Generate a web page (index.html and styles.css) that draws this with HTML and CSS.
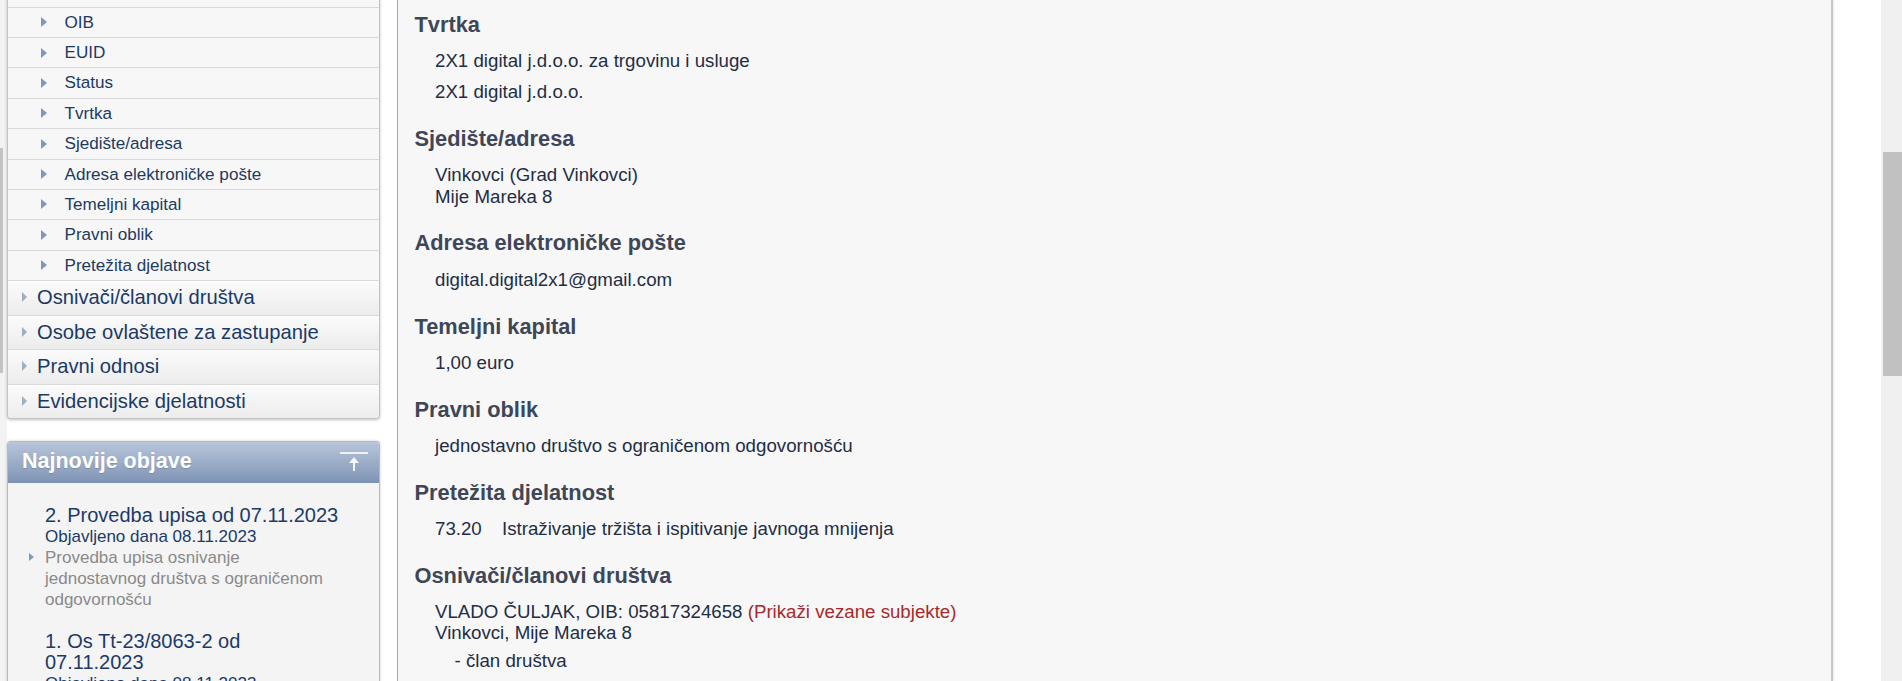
FILE: index.html
```html
<!DOCTYPE html>
<html lang="hr">
<head>
  <meta charset="UTF-8">
  <meta name="viewport" content="width=device-width, initial-scale=1">
  <title>Sudski registar - 2X1 digital j.d.o.o.</title>
  <link rel="stylesheet" href="styles.css">
</head>
<body>
  <div class="page">

    <!-- Left column: section menu + latest announcements -->
    <aside class="sidebar">
      <ul class="menu">
        <li class="sub"><a href="#mbs">MBS</a></li>
        <li class="sub"><a href="#oib">OIB</a></li>
        <li class="sub"><a href="#euid">EUID</a></li>
        <li class="sub"><a href="#status">Status</a></li>
        <li class="sub"><a href="#tvrtka">Tvrtka</a></li>
        <li class="sub"><a href="#sjediste">Sjedište/adresa</a></li>
        <li class="sub"><a href="#email">Adresa elektroničke pošte</a></li>
        <li class="sub"><a href="#kapital">Temeljni kapital</a></li>
        <li class="sub"><a href="#oblik">Pravni oblik</a></li>
        <li class="sub"><a href="#djelatnost">Pretežita djelatnost</a></li>
        <li class="top"><a href="#osnivaci">Osnivači/članovi društva</a></li>
        <li class="top"><a href="#osobe">Osobe ovlaštene za zastupanje</a></li>
        <li class="top"><a href="#odnosi">Pravni odnosi</a></li>
        <li class="top last"><a href="#evidencijske">Evidencijske djelatnosti</a></li>
      </ul>

      <div class="news">
        <div class="news-head">
          <span>Najnovije objave</span>
          <button class="to-top" title="Na vrh">
            <svg width="28" height="20" viewBox="0 0 28 20">
              <rect x="0" y="0" width="28" height="2" fill="#eef2f8"/>
              <path d="M14 5 L19 11 L9 11 Z" fill="#f4f7fb"/>
              <rect x="13" y="10" width="2" height="9" fill="#f4f7fb"/>
            </svg>
          </button>
        </div>
        <ul class="news-list">
          <li class="news-item">
            <a class="news-title" href="#">2. Provedba upisa od 07.11.2023</a>
            <div class="news-date">Objavljeno dana 08.11.2023</div>
            <p class="news-desc">Provedba upisa osnivanje jednostavnog društva s ograničenom odgovornošću</p>
          </li>
          <li class="news-item">
            <a class="news-title" href="#">1. Os Tt-23/8063-2 od 07.11.2023</a>
            <div class="news-date">Objavljeno dana 08.11.2023</div>
            <p class="news-desc">Rješenje o upisu osnivanja</p>
          </li>
        </ul>
      </div>
    </aside>

    <!-- Main column: subject details -->
    <main class="details">
      <section class="field" id="tvrtka">
        <h3>Tvrtka</h3>
        <p>2X1 digital j.d.o.o. za trgovinu i usluge</p>
        <p>2X1 digital j.d.o.o.</p>
      </section>

      <section class="field" id="sjediste">
        <h3>Sjedište/adresa</h3>
        <p>Vinkovci (Grad Vinkovci)<br>Mije Mareka 8</p>
      </section>

      <section class="field" id="email">
        <h3>Adresa elektroničke pošte</h3>
        <p>digital.digital2x1@gmail.com</p>
      </section>

      <section class="field" id="kapital">
        <h3>Temeljni kapital</h3>
        <p>1,00 euro</p>
      </section>

      <section class="field" id="oblik">
        <h3>Pravni oblik</h3>
        <p>jednostavno društvo s ograničenom odgovornošću</p>
      </section>

      <section class="field" id="djelatnost">
        <h3>Pretežita djelatnost</h3>
        <p><span class="code">73.20</span>Istraživanje tržišta i ispitivanje javnoga mnijenja</p>
      </section>

      <section class="field" id="osnivaci">
        <h3>Osnivači/članovi društva</h3>
        <p>VLADO ČULJAK, OIB: 05817324658 <a class="related" href="#">(Prikaži vezane subjekte)</a><br>Vinkovci, Mije Mareka 8</p>
        <div class="role">- član društva</div>
      </section>
    </main>

    <div class="scrollbar">
      <div class="thumb"></div>
    </div>
  </div>
</body>
</html>
```

FILE: styles.css
```css
/* General */
* {
  margin: 0;
  padding: 0;
  box-sizing: border-box;
}

html, body {
  height: 100%;
}

body {
  font-family: "Liberation Sans", Arial, sans-serif;
  background:
    linear-gradient(#c3c3c3, #c3c3c3) 0 148px / 3px 225px no-repeat,
    linear-gradient(to right, #f3f3f3 7px, #ffffff 7px);
  overflow: hidden;
}

a {
  text-decoration: none;
  color: inherit;
}

.page {
  display: flex;
  height: 681px;
  padding-left: 7px;
}

/* Sidebar (page is scrolled, menu header is above the fold) */
.sidebar {
  width: 373px;
  flex: none;
  margin-right: 17px;
  margin-top: -22.67px;
}

.menu {
  list-style: none;
  background: #f7f7f7;
  border: 1px solid #c4c4c4;
  border-top: none;
  border-radius: 0 0 4px 4px;
  box-shadow: 0 1px 3px rgba(0, 0, 0, 0.25);
}

.menu li {
  border-bottom: 1px solid #dadada;
  color: #1d3a60;
}

.menu li.last {
  border-bottom: none;
  border-radius: 0 0 4px 4px;
}

.menu li a {
  display: block;
  white-space: nowrap;
}

.menu li a::before {
  content: "";
  display: inline-block;
  vertical-align: middle;
  border-style: solid;
  border-color: transparent;
}

.menu .sub a {
  font-size: 17.1px;
  line-height: 29.37px;
  padding-left: 33px;
}

.menu .sub a::before {
  border-width: 5px 0 5px 6.5px;
  border-left-color: #7f98bf;
  margin: -2px 17.5px 0 0;
}

.menu .top {
  background: linear-gradient(#fbfbfb, #ececec);
}

.menu .top a {
  font-size: 20.2px;
  line-height: 33.5px;
  padding-left: 14px;
  color: #1a3a66;
}

.menu .top a::before {
  border-width: 5px 0 5px 5px;
  border-left-color: #a2aec0;
  margin: -3px 10px 0 0;
}

/* Latest announcements */
.news {
  margin-top: 22px;
  border: 1px solid #b9b9b9;
  border-bottom: none;
  border-radius: 4px 4px 0 0;
  background: #f4f4f4;
  box-shadow: 0 0 3px rgba(0, 0, 0, 0.2);
  height: 400px;
}

.news-head {
  height: 41px;
  display: flex;
  align-items: center;
  justify-content: space-between;
  padding: 0 11px 2px 14px;
  background: linear-gradient(#b8c6db, #7e93b4);
  border-radius: 3px 3px 0 0;
  color: #ffffff;
  font-size: 21.5px;
  font-weight: bold;
  text-shadow: 0 1px 1px rgba(0, 0, 0, 0.15);
}

.to-top {
  background: none;
  border: none;
  cursor: pointer;
  display: flex;
  margin-top: 0;
}

.news-list {
  list-style: none;
  padding: 21.6px 36px 0 37px;
}

.news-item {
  margin-bottom: 20.6px;
}

.news-title {
  display: block;
  font-size: 20px;
  line-height: 21.3px;
  color: #1b3a68;
}

.news-date {
  font-size: 17px;
  line-height: 21px;
  color: #1b3a68;
}

.news-desc {
  font-size: 17px;
  line-height: 21px;
  color: #8a8a8a;
}

.news-desc::before {
  content: "";
  display: inline-block;
  vertical-align: middle;
  border-style: solid;
  border-color: transparent;
  border-width: 4.5px 0 4.5px 5px;
  border-left-color: #7f98bf;
  margin: -3px 11px 0 -16px;
}

/* Main details panel */
.details {
  flex: 1;
  background: #f7f7f7;
  border-left: 1px solid #a8a8a8;
  border-right: 2px solid #c6c6c6;
  box-shadow: 1px 0 2px rgba(0, 0, 0, 0.08);
  padding: 12.6px 0 0 16.5px;
}

.field {
  margin-bottom: 24.26px;
}

.field h3 {
  font-size: 21.8px;
  line-height: 23px;
  font-weight: bold;
  color: #3e4657;
  margin-bottom: 14.3px;
}

.field p {
  font-size: 18.7px;
  line-height: 21.5px;
  color: #1e2e45;
  padding-left: 20.5px;
}

.field p + p {
  margin-top: 9.8px;
}

.field .code {
  display: inline-block;
  width: 67px;
}

.field .related {
  color: #a52a2a;
}

.field .role {
  font-size: 18.7px;
  line-height: 21.5px;
  color: #1e2e45;
  padding-left: 40px;
  margin-top: 5.7px;
}

/* Fake browser scrollbar */
.scrollbar {
  width: 21px;
  flex: none;
  margin-left: 48px;
  background: #f0f0f0;
}

.thumb {
  margin: 152px 0 0 2px;
  height: 224px;
  background: #c1c1c1;
}
```
